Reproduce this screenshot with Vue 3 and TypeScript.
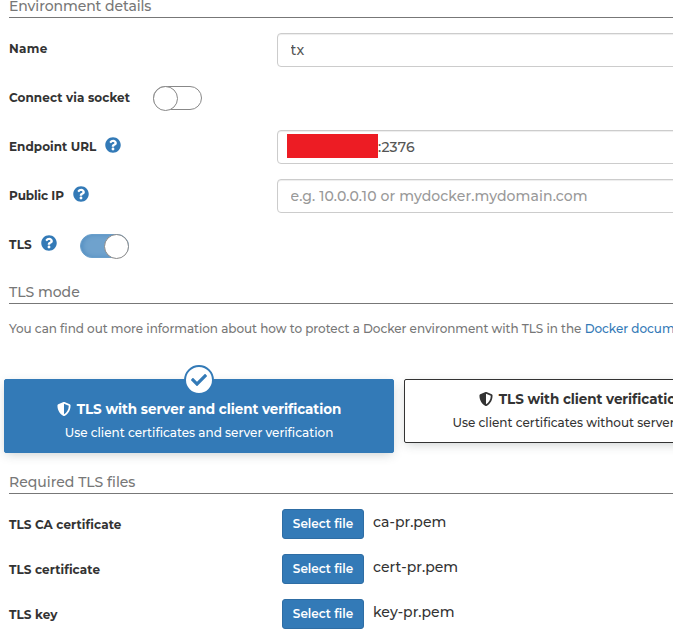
<script setup lang="ts">
import { ref } from 'vue'

interface TlsFile {
  key: string
  label: string
  file: string
}

const name = ref('tx')
const publicIp = ref('')
const socket = ref(false)
const tls = ref(true)

const files: TlsFile[] = [
  { key: 'ca', label: 'TLS CA certificate', file: 'ca-pr.pem' },
  { key: 'cert', label: 'TLS certificate', file: 'cert-pr.pem' },
  { key: 'key', label: 'TLS key', file: 'key-pr.pem' },
]

const helpPath =
  'M504 256c0 136.997-111.043 248-248 248S8 392.997 8 256C8 119.083 119.043 8 256 8s248 111.083 248 248zM262.655 90c-54.497 0-89.255 22.957-116.549 63.758-3.536 5.286-2.353 12.415 2.715 16.258l34.699 26.31c5.205 3.947 12.621 3.008 16.665-2.122 17.864-22.658 30.113-35.797 57.303-35.797 20.429 0 45.698 13.148 45.698 32.958 0 14.976-12.363 22.667-32.534 33.976C247.128 238.528 216 254.941 216 296v4c0 6.627 5.373 12 12 12h56c6.627 0 12-5.373 12-12v-1.333c0-28.462 83.186-29.647 83.186-106.667 0-58.002-60.165-102-116.531-102zM256 338c-25.365 0-46 20.635-46 46 0 25.364 20.635 46 46 46s46-20.636 46-46c0-25.364-20.635-46-46-46z'
const shieldPath =
  'M466.5 83.7l-192-80a48.15 48.15 0 0 0-36.9 0l-192 80C27.7 91.1 16 108.6 16 128c0 198.5 114.5 335.7 221.5 380.3 11.8 4.9 25.1 4.9 36.9 0C360.1 472.6 496 349.3 496 128c0-19.4-11.7-36.9-29.5-44.3zM256.1 446.3l-.1-381 175.9 73.3c-3.3 151.4-82.1 261.1-175.8 307.7z'
const checkPath =
  'M173.898 439.404l-166.4-166.4c-9.997-9.997-9.997-26.206 0-36.204l36.203-36.204c9.997-9.998 26.207-9.998 36.204 0L192 312.69 432.095 72.596c9.997-9.997 26.207-9.997 36.204 0l36.203 36.204c9.997 9.997 9.997 26.206 0 36.204l-294.4 294.401c-9.998 9.997-26.207 9.997-36.204-.001z'
</script>

<template>
  <main class="page">
    <form class="form" @submit.prevent>
      <h2 class="section env">Environment details</h2>

      <div class="row first">
        <label class="label name">Name</label>
        <input v-model="name" class="control" type="text" />
      </div>
      <div class="row">
        <label class="label socket">Connect via socket</label>
        <button type="button" class="switch s1" :class="{ on: socket }" @click="socket = !socket"><i></i></button>
      </div>
      <div class="row">
        <label class="label endpoint">Endpoint URL</label>
        <svg class="help" viewBox="0 0 512 512"><path :d="helpPath" /></svg>
        <div class="control url"><span class="redacted"></span><span>:2376</span></div>
      </div>
      <div class="row">
        <label class="label public">Public IP</label>
        <svg class="help" viewBox="0 0 512 512"><path :d="helpPath" /></svg>
        <input v-model="publicIp" class="control" type="text" placeholder="e.g. 10.0.0.10 or mydocker.mydomain.com" />
      </div>
      <div class="row last">
        <label class="label tls">TLS</label>
        <svg class="help" viewBox="0 0 512 512"><path :d="helpPath" /></svg>
        <button type="button" class="switch s2" :class="{ on: tls }" @click="tls = !tls"><i></i></button>
      </div>

      <h2 class="section mode">TLS mode</h2>
      <p class="info"><span>You can find out more information about how to protect a Docker environment with TLS in the </span><a href="#">Docker documentation</a>.</p>

      <div class="cards">
        <div class="card selected">
          <span class="badge"><svg viewBox="0 0 512 512"><path :d="checkPath" /></svg></span>
          <div class="title"><svg viewBox="0 0 512 512"><path :d="shieldPath" /></svg><b>TLS with server and client verification</b></div>
          <div class="sub">Use client certificates and server verification</div>
        </div>
        <div class="card">
          <div class="title"><svg viewBox="0 0 512 512"><path :d="shieldPath" /></svg><b>TLS with client verification only</b></div>
          <div class="sub">Use client certificates without server verification</div>
        </div>
      </div>

      <h2 class="section required">Required TLS files</h2>
      <div v-for="f in files" :key="f.key" class="file-row">
        <label class="label">{{ f.label }}</label>
        <button type="button" class="select">Select file</button>
        <span class="file">{{ f.file }}</span>
      </div>
    </form>
  </main>
</template>

<style>
body {
  background: #fff;
}
</style>

<style scoped>
.page {
  width: 100%;
  height: 634px;
  overflow: hidden;
  font-family: Montserrat, Inter, 'Liberation Sans', sans-serif;
  font-size: 12px;
  color: #333;
}
.page * {
  box-sizing: border-box;
}
.form {
  width: 803px;
  padding-left: 9px;
}
.section {
  margin: 0;
  height: 18px;
  line-height: 13px;
  border-bottom: 1px solid #777;
  color: #777;
  font-size: 14px;
  font-weight: 500;
  white-space: nowrap;
}
.env {
  letter-spacing: -0.08px;
}
.row {
  display: flex;
  align-items: flex-start;
  height: 49px;
  width: 794px;
}
.row.first {
  margin-top: 14px;
}
.row.first .control {
  margin-top: 1px;
}
.row.last {
  height: 58px;
}
.label {
  flex: none;
  line-height: 33px;
  font-size: 12px;
  font-weight: 700;
  white-space: nowrap;
}
.name {
  letter-spacing: 0.3px;
}
.socket {
  letter-spacing: 0.08px;
}
.endpoint {
  letter-spacing: 0.04px;
}
.public {
  letter-spacing: -0.1px;
}
.tls {
  letter-spacing: 0.25px;
}
.help {
  flex: none;
  width: 16px;
  height: 16px;
  margin: 7px 0 0 9px;
  fill: #337ab7;
}
.control {
  width: 526px;
  height: 34px;
  margin: 0 0 0 auto;
  padding: 0 12.5px;
  border: 1px solid #ccc;
  border-radius: 4px;
  background: #fff;
  box-shadow: inset 0 1px 1px rgba(0, 0, 0, 0.075);
  color: #555;
  font-family: inherit;
  font-size: 14px;
  font-weight: 500;
  letter-spacing: 0.12px;
  outline: none;
}
.control::placeholder {
  color: #999;
  opacity: 1;
}
.url {
  display: flex;
  align-items: center;
  padding-left: 9px;
  letter-spacing: 0.2px;
}
.redacted {
  width: 91px;
  height: 24px;
  margin-bottom: 2px;
  background: #ed1c24;
}
.switch {
  flex: none;
  width: 49px;
  height: 24px;
  margin-top: 5px;
  padding: 0;
  border: 1px solid #888;
  border-radius: 12px;
  background: #fff;
}
.switch i {
  display: block;
  width: 25px;
  height: 25px;
  margin: -1.5px 0 0 -1px;
  border: 1px solid #888;
  border-radius: 50%;
  background: #fff;
}
.switch.on {
  border-color: #6a9fcb;
  background: #6fa2cd;
  box-shadow: inset 2px 0 4px #5590c2;
}
.switch.on i {
  margin-left: 23px;
}
.s1 {
  margin-left: 23px;
}
.s2 {
  margin: 6px 0 0 23px;
}
.info {
  margin: 16px 0 0;
  line-height: 18px;
  font-weight: 500;
  letter-spacing: -0.04px;
  color: #777;
  white-space: nowrap;
}
.info a {
  color: #337ab7;
  text-decoration: none;
}
.cards {
  display: flex;
  align-items: flex-start;
  gap: 10px;
  margin: 41px 0 0 -5px;
  height: 98px;
}
.card {
  position: relative;
  flex: none;
  width: 390px;
  height: 64px;
  padding-top: 9px;
  border: 1px solid #333;
  border-radius: 2px;
  background: #fff;
  box-shadow: 0 3px 10px -2px rgba(40, 60, 60, 0.25);
  text-align: center;
}
.card.selected {
  height: 74px;
  padding-top: 19px;
  border-color: #337ab7;
  background: #337ab7;
  color: #fff;
}
.badge {
  position: absolute;
  top: -15px;
  left: 179px;
  display: flex;
  align-items: center;
  justify-content: center;
  width: 30px;
  height: 30px;
  border: 2px solid #337ab7;
  border-radius: 50%;
  background: #fff;
  fill: #337ab7;
}
.badge svg {
  width: 16px;
  height: 16px;
}
.title {
  display: flex;
  align-items: center;
  justify-content: center;
  gap: 6px;
  height: 20px;
  font-size: 13.5px;
  letter-spacing: -0.06px;
  white-space: nowrap;
}
.title svg {
  width: 14px;
  height: 14px;
  fill: currentColor;
}
.sub {
  margin-top: 4px;
  line-height: 20px;
  font-weight: 500;
  white-space: nowrap;
}
.required {
  height: 17px;
  margin-bottom: 16px;
  line-height: 11px;
}
.file-row {
  display: flex;
  align-items: flex-start;
  height: 45px;
}
.file-row .label {
  width: 273px;
  line-height: 30px;
  letter-spacing: 0.08px;
}
.select {
  width: 82px;
  height: 30px;
  margin: -1px 0 0;
  padding: 0 0 1px;
  border: 1px solid #2e6da4;
  border-radius: 3px;
  background: #337ab7;
  color: #fff;
  font-family: inherit;
  font-size: 12px;
  font-weight: 600;
}
.file {
  margin-left: 9px;
  line-height: 25px;
  font-size: 14px;
  font-weight: 500;
  letter-spacing: 0.05px;
}
</style>
